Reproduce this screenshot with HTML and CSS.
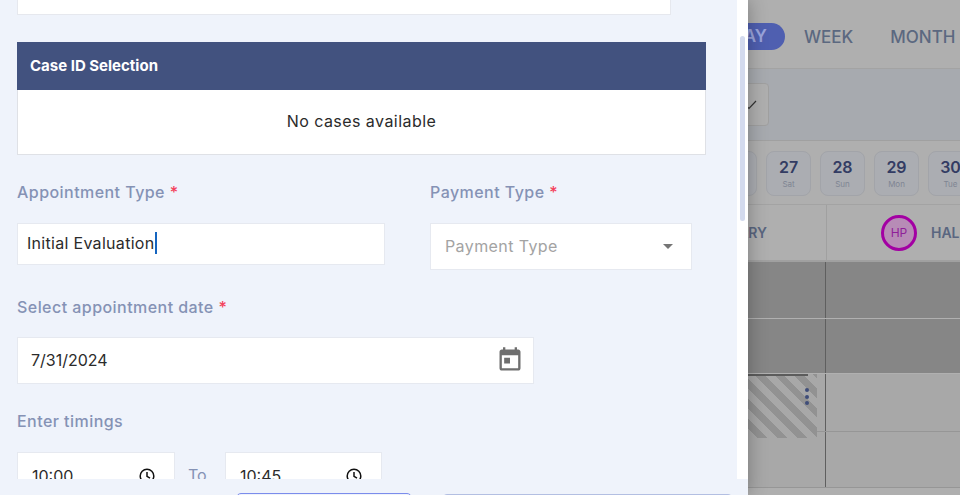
FILE: index.html
```html
<!DOCTYPE html>
<html lang="en">
<head>
    <meta charset="UTF-8">
    <meta name="viewport" content="width=device-width, initial-scale=1.0">
    <title>New appointment</title>
    <link rel="stylesheet" href="styles.css">
</head>
<body>
    <div class="page">
        <aside class="drawer">
            <div class="drawer-main">
                <div class="drawer-scroll">
                    <div class="top-card"></div>

                    <section class="case-box">
                        <h2 class="case-head">Case ID Selection</h2>
                        <p class="case-body">No cases available</p>
                    </section>

                    <div class="type-row">
                        <div>
                            <div class="field-label">Appointment Type <span class="req">*</span></div>
                            <div class="field field-type">Initial Evaluation<span class="caret"></span></div>
                        </div>
                        <div>
                            <div class="field-label">Payment Type <span class="req">*</span></div>
                            <div class="field field-payment">
                                <span class="placeholder">Payment Type</span>
                                <svg class="arrow" width="10" height="5" viewBox="0 0 10 5"><path d="M0 0h10L5 5z" fill="#757575"/></svg>
                            </div>
                        </div>
                    </div>

                    <div class="field-label">Select appointment date <span class="req">*</span></div>
                    <div class="field field-date">
                        <span>7/31/2024</span>
                        <svg class="cal-icon" width="28" height="28" viewBox="0 0 24 24"><path fill="#6f6f6f" d="M19 3h-1V1h-2v2H8V1H6v2H5c-1.11 0-1.99.9-1.99 2L3 19c0 1.1.89 2 2 2h14c1.1 0 2-.9 2-2V5c0-1.1-.9-2-2-2zm0 16H5V8h14v11zM7 10h5v5H7z"/></svg>
                    </div>

                    <div class="field-label">Enter timings</div>
                    <div class="time-row">
                        <div class="field field-time">
                            <span>10:00</span>
                            <svg class="clock" width="16" height="16" viewBox="0 0 16 16"><circle cx="8" cy="8" r="6.8" fill="none" stroke="#111" stroke-width="1.5"/><path d="M8 4v4.3l3 1.9" fill="none" stroke="#111" stroke-width="1.5"/></svg>
                        </div>
                        <span class="to-label">To</span>
                        <div class="field field-time field-time-end">
                            <span>10:45</span>
                            <svg class="clock" width="16" height="16" viewBox="0 0 16 16"><circle cx="8" cy="8" r="6.8" fill="none" stroke="#111" stroke-width="1.5"/><path d="M8 4v4.3l3 1.9" fill="none" stroke="#111" stroke-width="1.5"/></svg>
                        </div>
                    </div>
                </div>
                <div class="scroll-track"><div class="scroll-thumb"></div></div>
            </div>
            <div class="drawer-foot">
                <button class="foot-btn foot-btn-cancel"></button>
                <button class="foot-btn foot-btn-save"></button>
            </div>
        </aside>

        <main class="calendar">
            <div class="view-tabs">
                <span class="tab tab-active">DAY</span>
                <span class="tab">WEEK</span>
                <span class="tab">MONTH</span>
            </div>

            <div class="filter-row">
                <div class="filter-btn">
                    <svg width="12" height="10" viewBox="0 0 12 10"><path d="M1 5.5l3 3L11 1" fill="none" stroke="#333" stroke-width="1.2"/></svg>
                </div>
            </div>

            <div class="date-row">
                <div class="date-card"></div>
                <div class="date-card"><b>27</b><small>Sat</small></div>
                <div class="date-card"><b>28</b><small>Sun</small></div>
                <div class="date-card"><b>29</b><small>Mon</small></div>
                <div class="date-card"><b>30</b><small>Tue</small></div>
            </div>

            <div class="staff-row">
                <div class="staff-cell staff-first"><span class="staff-name">BERRY</span></div>
                <div class="staff-cell">
                    <span class="avatar">HP</span>
                    <span class="staff-name">HALL</span>
                </div>
            </div>

            <div class="slots">
                <div class="slot-line slot-dark slot-first"><div></div><div></div></div>
                <div class="slot-line slot-dark slot-second"><div></div><div></div></div>
                <div class="slot-line slot-light slot-third"><div></div><div></div></div>
                <div class="slot-line slot-light"><div></div><div></div></div>
                <div class="event">
                    <span class="dot"></span>
                    <span class="dot"></span>
                    <span class="dot"></span>
                </div>
            </div>
        </main>
    </div>
</body>
</html>
```

FILE: styles.css
```css
body {
    margin: 0;
    font-family: Inter, "Open Sans", sans-serif;
    color: #2b2b2b;
}

.page {
    display: flex;
    width: 960px;
    height: 495px;
    overflow: hidden;
}

/* left drawer */
.drawer {
    position: relative;
    z-index: 2;
    width: 748px;
    flex: none;
    display: flex;
    flex-direction: column;
    background: #eff3fb;
    box-shadow: 0 0 18px rgba(0, 0, 0, 0.3);
}

.drawer-main {
    display: flex;
    height: 479px;
}

.drawer-scroll {
    width: 737px;
    box-sizing: border-box;
    padding: 0 17px;
    overflow: hidden;
}

.scroll-track {
    width: 11px;
    background: #fff;
    padding: 36px 3px 0;
    box-sizing: border-box;
}

.scroll-thumb {
    width: 5px;
    height: 185px;
    background: #d3daee;
    border-radius: 3px;
}

.top-card {
    width: 654px;
    height: 15px;
    box-sizing: border-box;
    background: #fff;
    border: 1px solid #e6e8ee;
    border-top: none;
    margin-bottom: 27px;
}

.case-box {
    width: 689px;
    background: #fff;
    border: 1px solid #dfe1e6;
    border-top: none;
    box-sizing: border-box;
    margin-bottom: 26px;
}

.case-head {
    margin: 0 -1px;
    height: 48px;
    line-height: 48px;
    padding-left: 13px;
    background: #42527f;
    color: #fff;
    font-size: 15px;
    font-weight: 700;
}

.case-body {
    margin: 0;
    height: 64px;
    line-height: 63px;
    text-align: center;
    font-size: 16px;
    letter-spacing: 0.45px;
}

.type-row {
    display: grid;
    grid-template-columns: 368px 262px;
    column-gap: 45px;
    margin-bottom: 26px;
}

.field-label {
    height: 22px;
    line-height: 22px;
    font-size: 16px;
    font-weight: 500;
    letter-spacing: 0.45px;
    color: #8592b5;
    margin-bottom: 20px;
}

.req {
    color: #f4405a;
}

.field {
    display: flex;
    align-items: center;
    justify-content: space-between;
    box-sizing: border-box;
    background: #fff;
    border: 1px solid #e6e9f0;
    font-size: 16px;
    padding-bottom: 2px;
}

.field-type {
    height: 42px;
    justify-content: flex-start;
    padding-left: 9px;
    letter-spacing: 0.3px;
}

.caret {
    width: 2px;
    height: 22px;
    background: #1565c0;
}

.field-payment {
    height: 47px;
    padding-left: 14px;
    padding-right: 18px;
}

.placeholder {
    color: #a3a3a3;
    letter-spacing: 0.4px;
}

.arrow {
    margin-top: 2px;
}

.field-date {
    width: 517px;
    height: 47px;
    padding-left: 13px;
    padding-right: 9px;
    margin-bottom: 26px;
    margin-top: -1px;
}

.time-row {
    display: flex;
    align-items: flex-start;
}

.field-time {
    width: 158px;
    height: 47px;
    padding-left: 14px;
    padding-right: 19px;
    padding-bottom: 0;
    flex: none;
}

.field-time-end {
    width: 157px;
}

.to-label {
    width: 50px;
    padding: 13px 0 0 13px;
    box-sizing: border-box;
    font-size: 16px;
    color: #8592b5;
}

.drawer-foot {
    flex: 1;
    display: flex;
    padding: 14px 0 0 236px;
    gap: 30px;
}

.foot-btn {
    height: 30px;
    padding: 0;
    background: #eff3fb;
    border-radius: 5px;
}

.foot-btn-cancel {
    width: 176px;
    border: 1px solid #7b8cec;
}

.foot-btn-save {
    width: 291px;
    margin-top: 1px;
    border: 1px solid #b3bfe2;
}

/* dimmed calendar behind the drawer */
.calendar {
    flex: 1;
    min-width: 0;
    overflow: hidden;
    display: flex;
    flex-direction: column;
    background: #afafaf;
}

.view-tabs {
    height: 69px;
    flex: none;
    display: flex;
    align-items: center;
    gap: 37px;
    margin-left: -30px;
    padding-top: 5px;
    box-sizing: border-box;
    font-size: 17px;
    font-weight: 500;
    color: #5b6880;
    border-bottom: 1px solid #a3a3a3;
}

.tab {
    flex: none;
}

.tab-active {
    width: 67px;
    height: 27px;
    line-height: 27px;
    box-sizing: border-box;
    padding-right: 18px;
    text-align: right;
    border-radius: 14px;
    background: #4f5fb0;
    color: #9aa4dc;
    font-weight: 600;
    margin-right: -18px;
}

.filter-row {
    height: 72px;
    flex: none;
    box-sizing: border-box;
    padding-top: 14px;
    background: #a7aaaf;
    border-bottom: 1px solid #a0a0a0;
}

.filter-btn {
    width: 40px;
    height: 43px;
    margin-left: -19px;
    box-sizing: border-box;
    display: flex;
    align-items: center;
    justify-content: flex-end;
    padding-right: 11px;
    border: 1px solid #a0a0a0;
    border-radius: 4px;
    background: #afafaf;
}

.date-row {
    height: 64px;
    flex: none;
    box-sizing: border-box;
    display: flex;
    gap: 9px;
    margin-left: -36px;
    padding-top: 10px;
    border-bottom: 1px solid #a3a3a3;
}

.date-card {
    width: 45px;
    height: 45px;
    flex: none;
    box-sizing: border-box;
    display: flex;
    flex-direction: column;
    align-items: center;
    padding-top: 5px;
    border: 1px solid #a2a4a9;
    border-radius: 8px;
    background: #abadb2;
}

.date-card b {
    font-size: 16px;
    line-height: 20px;
    color: #333c63;
    font-weight: 600;
}

.date-card small {
    font-size: 8px;
    line-height: 14px;
    color: #7f8593;
}

.staff-row {
    height: 55px;
    flex: none;
    display: flex;
    border-bottom: 2px solid #a0a0a0;
}

.staff-cell {
    flex: 1;
    display: flex;
    align-items: center;
    padding-left: 54px;
    gap: 14px;
}

.staff-first {
    flex: none;
    width: 79px;
    padding: 0 59px 0 0;
    box-sizing: border-box;
    justify-content: flex-end;
    border-right: 1px solid #a0a0a0;
}

.staff-name {
    font-size: 14px;
    font-weight: 600;
    color: #5a6680;
    white-space: nowrap;
}

.avatar {
    width: 36px;
    height: 36px;
    flex: none;
    box-sizing: border-box;
    display: flex;
    align-items: center;
    justify-content: center;
    border: 3px solid #a300a3;
    border-radius: 50%;
    background: #b78cb6;
    font-size: 12px;
    color: #8f1f99;
}

.slots {
    position: relative;
    flex: 1;
}

.slot-line {
    display: grid;
    grid-template-columns: 78px 1fr;
    height: 56px;
    box-sizing: border-box;
    border-bottom: 1px solid #b0b0b0;
}

.slot-line div:first-child {
    border-right: 1px solid #5f5f5f;
}

.slot-dark {
    background: #868686;
}

.slot-light {
    background: #a8a8a8;
    border-bottom-color: #969696;
}

.slot-first {
    height: 57px;
}

.slot-second {
    height: 55px;
}

.slot-third {
    height: 58px;
}

.event {
    position: absolute;
    left: 0;
    top: 112px;
    width: 69px;
    height: 64px;
    box-sizing: border-box;
    padding: 14px 8px 0 0;
    display: flex;
    flex-direction: column;
    align-items: flex-end;
    gap: 2.5px;
    background: repeating-linear-gradient(45deg, #a8a8a8 0 7px, #929292 7px 14px);
}

.event::before {
    content: "";
    position: absolute;
    left: 0;
    top: 0;
    width: 60px;
    height: 2px;
    background: #5c5c5c;
}

.dot {
    width: 4px;
    height: 4px;
    border-radius: 50%;
    background: #3f4d79;
}
```
